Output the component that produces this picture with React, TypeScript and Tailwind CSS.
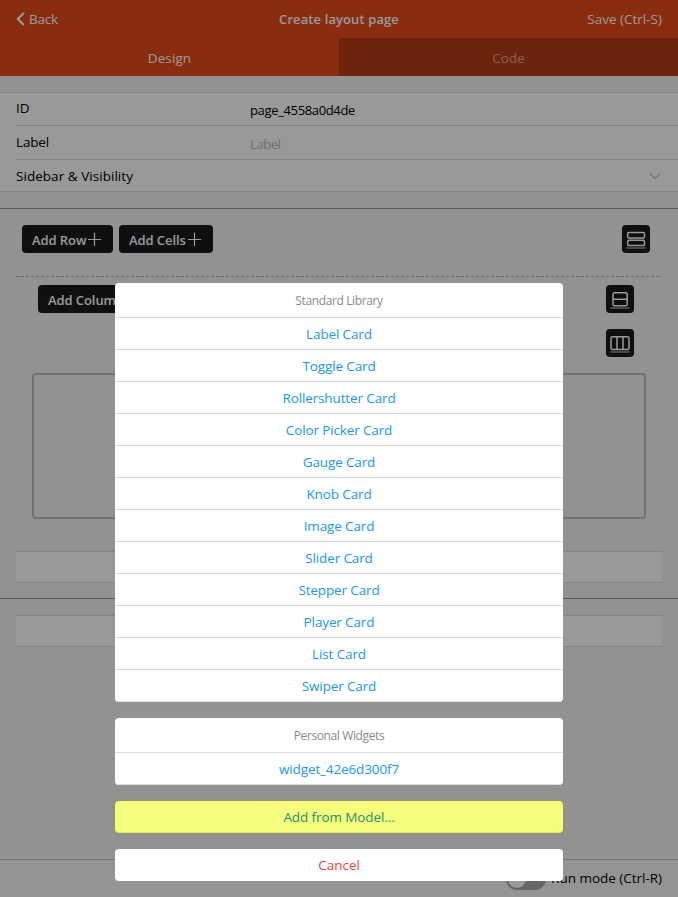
import React from 'react';

const cards = [
  'Label Card', 'Toggle Card', 'Rollershutter Card', 'Color Picker Card', 'Gauge Card', 'Knob Card',
  'Image Card', 'Slider Card', 'Stepper Card', 'Player Card', 'List Card', 'Swiper Card',
];

function Plus() {
  return (
    <svg width="14" height="14" viewBox="0 0 14 14" className="ml-[2px]" stroke="white" strokeWidth="1.2" strokeLinecap="round">
      <path d="M6.5 1v12.4M.3 7.5h12.4" />
    </svg>
  );
}

function AddButton({ label, className }: { label: string; className: string }) {
  return (
    <button className={`flex h-7 items-center rounded bg-[#1a1a1a] pl-2.5 text-[13px] font-semibold whitespace-nowrap text-white ${className}`}>
      <span className="pt-[3px] tracking-[-0.08px]">{label}</span>
      <Plus />
    </button>
  );
}

function IconButton({ children }: { children: React.ReactNode }) {
  return (
    <button className="h-7 w-7 shrink-0 rounded bg-[#1a1a1a]">
      <svg width="28" height="28" viewBox="0 0 28 28" fill="none" stroke="white" strokeWidth="1.5">
        {children}
        <path d="M5 23h18" stroke="#777" strokeWidth="1.8" strokeLinecap="round" />
      </svg>
    </button>
  );
}

function Rule() {
  return <div className="h-0.5 border-t border-b border-t-[#9a9a9a] border-b-[#eee]" />;
}

function Page() {
  return (
    <div className="flex h-full flex-col bg-[#f3f3f3]">
      <header className="grid h-[38px] grid-cols-3 items-center bg-[#e64a19] px-4 text-[13.5px] text-white">
        <div className="flex items-center">
          <svg width="9" height="14" viewBox="0 0 9 14" fill="none" stroke="white" strokeWidth="2.2" className="mr-1">
            <path d="M7.8 1 1.8 7l6 6" />
          </svg>
          <span className="tracking-[-0.2px]">Back</span>
        </div>
        <div className="pt-0.5 text-center text-[13px] font-semibold tracking-[0.1px]">Create layout page</div>
        <div className="text-right">Save (Ctrl-S)</div>
      </header>
      <nav className="grid h-[38px] grid-cols-2 overflow-hidden bg-[#e64a19] text-center leading-[40px] text-white">
        <div className="tracking-[0.1px]">Design</div>
        <div className="bg-black/20"><span className="opacity-50">Code</span></div>
      </nav>
      <section className="mt-4 h-[100px] border-y border-[#dedede] bg-white text-black">
        <div className="ml-4 flex h-[33px] border-b border-[#dedede]">
          <div className="w-[234px] leading-[30px]">ID</div>
          <div className="text-[13px] leading-[34px] tracking-[-0.35px]">page_4558a0d4de</div>
        </div>
        <div className="ml-4 flex h-[34px] border-b border-[#dedede]">
          <div className="w-[234px] leading-[32px] tracking-[-0.15px]">Label</div>
          <div className="text-[13px] leading-[36px] tracking-[-0.35px] text-[#b9b9b9]">Label</div>
        </div>
        <div className="ml-4 flex h-[31px] items-center justify-between pr-[17px]">
          <span className="pt-0.5 tracking-[0.04px]">Sidebar &amp; Visibility</span>
          <svg width="12" height="8" viewBox="0 0 12 8" fill="none" stroke="#c7c7cc" strokeWidth="1.5"><path d="m1 1.5 5 5 5-5" /></svg>
        </div>
      </section>
      <div className="mt-4"><Rule /></div>
      <div className="mt-[15px] flex pr-7 pl-[22px]">
        <AddButton label="Add Row" className="w-[91px]" />
        <AddButton label="Add Cells" className="ml-1.5 w-[94px]" />
        <div className="flex-1" />
        <IconButton>
          <rect x="5.7" y="7.6" width="16.8" height="5.4" rx="1.2" />
          <rect x="5.7" y="15.2" width="16.8" height="5.4" rx="1.2" />
        </IconButton>
      </div>
      <div className="mx-4 mt-[23px] h-px bg-[repeating-linear-gradient(90deg,#b0b0b0_0_3px,transparent_3px_5px)]" />
      <div className="mt-2 flex items-start justify-between pr-11 pl-[38px]">
        <AddButton label="Add Column" className="w-[112px]" />
        <div className="flex flex-col gap-4">
          <IconButton>
            <rect x="7" y="7.8" width="14.2" height="13" rx="1.6" />
            <path d="M7 14.3h14.2" />
          </IconButton>
          <IconButton>
            <rect x="5" y="7.7" width="18" height="12.8" rx="1.6" />
            <path d="M11 7.7v12.8M17 7.7v12.8" />
          </IconButton>
        </div>
      </div>
      <div className="mx-8 mt-4 h-[146px] rounded border-2 border-[#bcbcbc]" />
      <div className="mx-4 mt-8 h-8 border-y border-[#dedede] bg-white" />
      <div className="mt-[15px]"><Rule /></div>
      <div className="mx-4 mt-[15px] h-8 border-y border-[#dedede] bg-white" />
      <footer className="mt-auto flex h-[38px] items-center justify-end border-t border-[#c4c4c4] bg-[#f7f7f7] pr-4 text-black">
        <div className="mr-[5px] flex h-[22px] w-10 items-center rounded-full bg-[#aaa] pl-0.5"><div className="h-[18px] w-[18px] rounded-full bg-white" /></div>
        <span className="tracking-[-0.02px]">Run mode (Ctrl-R)</span>
      </footer>
    </div>
  );
}

function Group({ title, items }: { title: string; items: string[] }) {
  return (
    <div className="overflow-hidden rounded bg-white">
      <div className="h-[35px] border-b border-[#dedede] text-[12px] leading-[36px] tracking-[-0.38px] text-[#8a8a8a]">{title}</div>
      {items.map((item) => (
        <div key={item} className="h-8 border-b border-[#dedede] leading-[33px] tracking-[-0.13px] text-[#2196f3]">{item}</div>
      ))}
    </div>
  );
}

export default function App() {
  return (
    <div className="relative h-[897px] w-[678px] overflow-hidden font-['Open_Sans','Noto_Sans',sans-serif] text-[13.5px]">
      <Page />
      <div className="absolute inset-0 flex flex-col justify-end gap-4 bg-black/40 px-[115px] pb-4 text-center">
        <Group title="Standard Library" items={cards} />
        <Group title="Personal Widgets" items={['widget_42e6d300f7']} />
        <div className="h-8 rounded border-b border-[#dfe56f] bg-[#f5ff7c] leading-[33px] tracking-[-0.1px] text-[#269072] shadow-[0_0_0_2px_rgba(148,148,92,0.45)]">Add from Model...</div>
        <div className="h-8 rounded bg-white leading-[33px] text-[#f44336]">Cancel</div>
      </div>
    </div>
  );
}
